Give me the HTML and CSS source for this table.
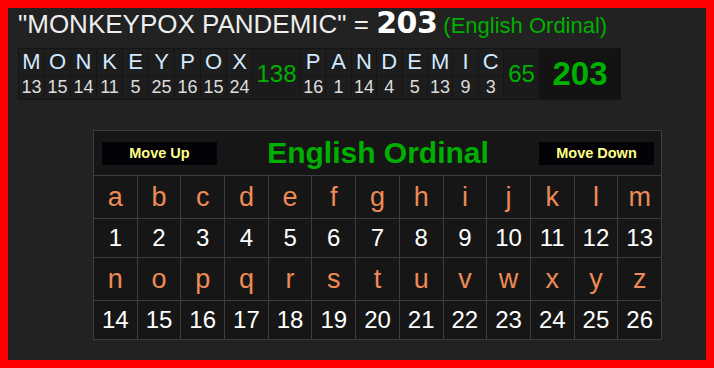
FILE: index.html
```html
<!DOCTYPE html>
<html>
<head>
<meta charset="utf-8">
<link rel="stylesheet" href="styles.css">
</head>
<body>
<div class="frame">
  <div class="title"><span class="phrase">"MONKEYPOX PANDEMIC" = </span><span class="sum">203</span><span class="cipher">(English Ordinal)</span></div>

  <div class="breakdown">
    <div class="word w9">
      <span class="ch">M</span><span class="ch">O</span><span class="ch">N</span><span class="ch">K</span><span class="ch">E</span><span class="ch">Y</span><span class="ch">P</span><span class="ch">O</span><span class="ch">X</span>
      <span class="nv">13</span><span class="nv">15</span><span class="nv">14</span><span class="nv">11</span><span class="nv">5</span><span class="nv">25</span><span class="nv">16</span><span class="nv">15</span><span class="nv">24</span>
    </div>
    <div class="wsum s1">138</div>
    <div class="word w8">
      <span class="ch">P</span><span class="ch">A</span><span class="ch">N</span><span class="ch">D</span><span class="ch">E</span><span class="ch">M</span><span class="ch">I</span><span class="ch">C</span>
      <span class="nv">16</span><span class="nv">1</span><span class="nv">14</span><span class="nv">4</span><span class="nv">5</span><span class="nv">13</span><span class="nv">9</span><span class="nv">3</span>
    </div>
    <div class="wsum s2">65</div>
    <div class="total">203</div>
  </div>

  <div class="chart">
    <div class="chart-head">
      <div class="btn">Move Up</div>
      <div class="chart-title">English Ordinal</div>
      <div class="btn">Move Down</div>
    </div>
    <div class="lt">a</div><div class="lt">b</div><div class="lt">c</div><div class="lt">d</div><div class="lt">e</div><div class="lt">f</div><div class="lt">g</div><div class="lt">h</div><div class="lt">i</div><div class="lt">j</div><div class="lt">k</div><div class="lt">l</div><div class="lt">m</div>
    <div class="vl">1</div><div class="vl">2</div><div class="vl">3</div><div class="vl">4</div><div class="vl">5</div><div class="vl">6</div><div class="vl">7</div><div class="vl">8</div><div class="vl">9</div><div class="vl">10</div><div class="vl">11</div><div class="vl">12</div><div class="vl">13</div>
    <div class="lt">n</div><div class="lt">o</div><div class="lt">p</div><div class="lt">q</div><div class="lt">r</div><div class="lt">s</div><div class="lt">t</div><div class="lt">u</div><div class="lt">v</div><div class="lt">w</div><div class="lt">x</div><div class="lt">y</div><div class="lt">z</div>
    <div class="vl">14</div><div class="vl">15</div><div class="vl">16</div><div class="vl">17</div><div class="vl">18</div><div class="vl">19</div><div class="vl">20</div><div class="vl">21</div><div class="vl">22</div><div class="vl">23</div><div class="vl">24</div><div class="vl">25</div><div class="vl">26</div>
  </div>
</div>
</body>
</html>
```

FILE: styles.css
```css
html, body {
  margin: 0;
  padding: 0;
  background: #ff0000;
}

.frame {
  box-sizing: border-box;
  width: 714px;
  height: 368px;
  border: 8px solid #ff0000;
  background: #222222;
  padding: 0 0 0 10px;
  font-family: "Liberation Sans", Arial, sans-serif;
  overflow: hidden;
}

.title {
  height: 40px;
  line-height: 30px;
  font-size: 26px;
  color: #eeeeee;
  white-space: pre;
}

.title .sum {
  font-family: "DejaVu Sans", sans-serif;
  font-size: 30px;
  font-weight: bold;
  color: #ffffff;
  letter-spacing: -0.5px;
}

.title .cipher {
  font-size: 22px;
  color: #00b000;
  margin-left: 6px;
}

.breakdown {
  display: flex;
  gap: 1px;
  padding: 1px;
  width: fit-content;
  background: #151515;
}

.word {
  display: grid;
  grid-template-rows: 26px 23px;
  row-gap: 1px;
  column-gap: 1px;
}

.w9 {
  width: 233px;
  grid-template-columns: repeat(9, 1fr);
}

.w8 {
  width: 202px;
  grid-template-columns: repeat(8, 1fr);
}

.ch, .nv {
  background: #1d1d1d;
  display: flex;
  align-items: center;
  justify-content: center;
}

.ch {
  font-size: 22px;
  color: #d2e8ff;
}

.nv {
  font-size: 18px;
  color: #dddddd;
}

.wsum {
  display: flex;
  align-items: center;
  justify-content: center;
  background: #1b1b1b;
  color: #00b000;
  font-size: 24px;
}

.s1 { width: 47px; }
.s2 { width: 35px; }

.total {
  width: 80px;
  display: flex;
  align-items: center;
  justify-content: center;
  background: #131313;
  color: #00b000;
  font-size: 33px;
  font-weight: bold;
}

.chart {
  margin: 30px 0 0 75px;
  width: 567px;
  padding: 1px;
  display: grid;
  grid-template-columns: repeat(13, 1fr);
  grid-template-rows: 44px 42px 38px 42px 38px;
  gap: 1px;
  background: #3d3d3d;
}

.chart-head {
  grid-column: 1 / -1;
  background: #161616;
  display: flex;
  align-items: center;
  justify-content: space-between;
  padding: 0 7px 0 8px;
}

.btn {
  width: 115px;
  height: 23px;
  background: #020207;
  color: #ffff88;
  font-weight: bold;
  font-size: 14.5px;
  display: flex;
  align-items: center;
  justify-content: center;
}

.chart-title {
  flex: 1;
  text-align: center;
  color: #00b000;
  font-weight: bold;
  font-size: 30px;
}

.lt, .vl {
  background: #161616;
  display: flex;
  align-items: center;
  justify-content: center;
}

.lt {
  color: #ee8a55;
  font-size: 27px;
}

.vl {
  color: #ffffff;
  font-size: 24px;
}
```
